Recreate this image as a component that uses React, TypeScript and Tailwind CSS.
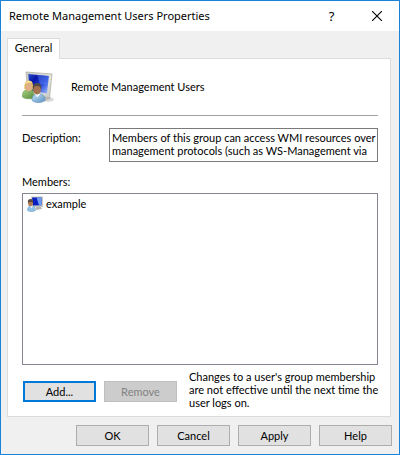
import { useState } from 'react';

const DESCRIPTION =
  'Members of this group can access WMI resources over\nmanagement protocols (such as WS-Management via';

const MEMBERS = ['example'];

const BUTTON =
  'h-[21px] w-[73px] flex-shrink-0 border border-[#adadad] bg-[#e1e1e1] text-center leading-[13px] text-black hover:border-[#0078d7] hover:bg-[#e5f1fb]';

function GroupIcon() {
  return (
    <svg width="32" height="34" viewBox="0 0 32 34" className="flex-shrink-0" aria-hidden="true">
      <defs>
        <linearGradient id="screen" x1="0" y1="0" x2="1" y2="1">
          <stop offset="0" stopColor="#2a50c8" />
          <stop offset="0.3" stopColor="#0512a8" />
          <stop offset="0.6" stopColor="#2448dc" />
          <stop offset="1" stopColor="#a9c6ff" />
        </linearGradient>
        <linearGradient id="frame" x1="0" y1="0" x2="1" y2="1">
          <stop offset="0" stopColor="#c8c8c4" />
          <stop offset="0.6" stopColor="#e6e6e0" />
          <stop offset="1" stopColor="#c3c3bd" />
        </linearGradient>
        <linearGradient id="green" x1="0" y1="0" x2="1" y2="1">
          <stop offset="0" stopColor="#a9d27e" />
          <stop offset="1" stopColor="#568b3f" />
        </linearGradient>
        <linearGradient id="blue" x1="0" y1="0" x2="1" y2="1">
          <stop offset="0" stopColor="#c2e0f5" />
          <stop offset="1" stopColor="#5b93c2" />
        </linearGradient>
      </defs>
      <ellipse cx="26" cy="28.500" rx="6" ry="2.500" fill="#dedede" />
      <path d="M21 26l6-1 2 3-7 2z" fill="#bcbcb8" />
      <path d="M4 1L30 3 27.500 27 6 22z" fill="url(#frame)" stroke="#b0b0aa" strokeWidth="0.800" />
      <path d="M6.300 3L26.800 4.900 25 22.500 7.500 19.500z" fill="url(#screen)" />
      <path d="M15 3.800L26.800 4.900 25.900 14 18 13z" fill="#5f86f0" opacity="0.450" />
      <path d="M0.300 26c0-5 1.700-7 5-7.500l4 0c2 1 3 4 2.500 8.500-4 1.500-9 1-11.500-1z" fill="url(#green)" stroke="#6b984e" strokeWidth="0.500" />
      <path d="M2.500 18c-0.500-6 1-8.500 4.500-8.500 3.500 0 4.500 3.500 4 9l-4 1z" fill="#dcb65a" />
      <ellipse cx="6.800" cy="16" rx="2.900" ry="4.200" fill="#e2ae89" />
      <path d="M3 13c0.500-4 6-4.500 7.500-1-2.500-0.700-5-0.300-7.500 1z" fill="#f4de92" />
      <path d="M10 29.500c0-4.500 2-6 5-6.500l4 0c3 1 4 3 4 6.500-3 2.500-9.500 3-13 0z" fill="url(#blue)" stroke="#5f8fb8" strokeWidth="0.600" />
      <path d="M13 23l2.300 3.500L18.500 23z" fill="#edf7fd" />
      <ellipse cx="15" cy="18.500" rx="3.900" ry="5" fill="#a6714e" />
      <path d="M11 18.500c-1-4.500 1-6.500 4.200-6.500 3 0 4.700 2 4 6.500l-1.500-3c-2-0.800-3.700-0.800-5.500 0z" fill="#4e4b48" />
    </svg>
  );
}

function UserIcon() {
  return (
    <svg width="16" height="16" viewBox="0 0 16 16" className="flex-shrink-0" aria-hidden="true">
      <path d="M4 0.500L16 0.500v10.500L5 11z" fill="#c9c9c2" />
      <path d="M5 1.500L14.500 1.500v7.800L6 9.500z" fill="#0a1fc0" />
      <path d="M9.500 1.500L14.500 1.500v7.800l-2.500 0z" fill="#6f9bf0" />
      <path d="M9 11h5l1 2-6 1z" fill="#b4b4ae" />
      <path d="M0.500 14.500c0-3 1-4.500 3-4.500h2c2 0 3 2 3 4.500-2 1.500-6 1.500-8 0z" fill="#91c1e4" stroke="#6b9dc4" strokeWidth="0.500" />
      <path d="M3 10l1.500 2.500L6 10z" fill="#eef8ff" />
      <ellipse cx="3.500" cy="7" rx="2.500" ry="3.300" fill="#b27b56" />
      <path d="M1 7c-0.500-3 0.500-4 2.500-4s3 1.500 2.500 3.500c-2-1-3.500-0.500-5 0.500z" fill="#5c4c40" />
    </svg>
  );
}

export default function App() {
  const [description, setDescription] = useState(DESCRIPTION);

  return (
    <div className="flex min-h-screen flex-col border border-[#1883d7] bg-[#f0f0f0] font-[Lato,'Liberation_Sans',sans-serif] text-[11px] leading-[13px] text-black">
      {/* Title bar */}
      <header className="flex h-[30px] flex-shrink-0 items-center bg-white pl-2">
        <h1 className="flex-1 font-['Noto_Sans','Open_Sans',sans-serif] text-[11px] leading-4">
          Remote Management Users Properties
        </h1>
        <button aria-label="Help" className="flex h-full w-[45px] items-center justify-center font-['Noto_Sans',sans-serif] text-[13px] hover:bg-[#e5e5e5]">
          ?
        </button>
        <button aria-label="Close" className="flex h-full w-[45px] items-center justify-center hover:bg-[#e81123]">
          <svg width="10" height="10" viewBox="0 0 10 10" stroke="black" strokeWidth="1.100">
            <path d="M0 0L10 10M10 0L0 10" />
          </svg>
        </button>
      </header>

      <main className="flex flex-1 flex-col pt-[7px] pr-2 pl-[6px]">
        {/* Tabs */}
        <div role="tablist" className="flex">
          <button role="tab" aria-selected="true" className="z-10 -mb-px h-[21px] w-[53px] border border-b-0 border-[#dcdcdc] bg-white pb-1">
            General
          </button>
        </div>

        <section role="tabpanel" className="flex flex-1 flex-col border border-[#dcdcdc] bg-white pt-3 pr-3 pb-[6px] pl-[14px]">
          <div className="flex items-center gap-[17px] pb-[10px]">
            <GroupIcon />
            <h2 className="pb-[3px]">Remote Management Users</h2>
          </div>
          <hr className="border-[#a0a0a0]" />

          <div className="mt-3 flex">
            <label htmlFor="description" className="w-[87px] flex-shrink-0 pt-[3px]">Description:</label>
            <textarea
              id="description"
              rows={2}
              value={description}
              onChange={(e) => setDescription(e.target.value)}
              className="h-[34px] min-w-0 flex-1 resize-none overflow-hidden border border-[#7a7a7a] p-[2px] whitespace-pre outline-none"
            />
          </div>

          <h3 id="members" className="mt-[13px] mb-[5px]">Members:</h3>
          <ul aria-labelledby="members" className="min-h-[120px] flex-1 border border-[#828790] p-[2px] pl-1">
            {MEMBERS.map((name) => (
              <li key={name} className="flex items-center gap-[3px]">
                <UserIcon />
                <span className="pb-[2px]">{name}</span>
              </li>
            ))}
          </ul>

          <div className="mt-[5px] flex items-start gap-2 pl-px">
            <button className="mt-[11px] h-[21px] w-[73px] flex-shrink-0 border-2 border-[#0078d7] bg-[#e1e1e1] leading-[13px]">
              Add...
            </button>
            <button disabled className="mt-[11px] h-[21px] w-[73px] flex-shrink-0 border border-[#bfbfbf] bg-[#cccccc] leading-[13px] text-[#838383]">
              Remove
            </button>
            <p className="-mr-2 mb-px min-w-0 flex-1 pl-1">
              Changes to a user's group membership are not effective until the next time the user logs on.
            </p>
          </div>
        </section>
      </main>

      {/* Dialog buttons */}
      <footer className="flex justify-end gap-2 pt-2 pr-[7px] pb-2">
        <button className={BUTTON}>OK</button>
        <button className={BUTTON}>Cancel</button>
        <button className={BUTTON}>Apply</button>
        <button className={BUTTON}>Help</button>
      </footer>
    </div>
  );
}
